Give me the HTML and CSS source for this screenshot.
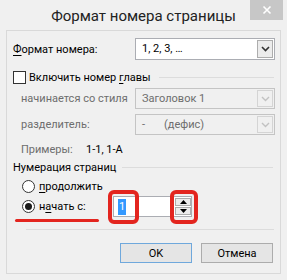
FILE: index.html
```html
<!DOCTYPE html>
<html lang="ru">
<head>
    <meta charset="UTF-8">
    <meta name="viewport" content="width=device-width, initial-scale=1.0">
    <title>Формат номера страницы</title>
    <link rel="stylesheet" href="styles.css">
</head>
<body>

<div class="window">
    <div class="titlebar">
        <span></span>
        <div class="title">Формат номера страницы</div>
        <div class="close">
            <svg width="10" height="10" viewBox="0 0 10 10"><path d="M1.5 1.5 L8.5 8.5 M8.5 1.5 L1.5 8.5" stroke="#fff" stroke-width="1.6"/></svg>
        </div>
    </div>

    <div class="content">
        <!-- format -->
        <div class="row row--format">
            <label class="lbl lbl--wide"><u>Ф</u>ормат номера:</label>
            <div class="combo">
                <span class="combo__text">1, 2, 3, …</span>
                <span class="combo__btn">
                    <svg width="9" height="6" viewBox="0 0 9 6"><path d="M1 1 L4.5 4.5 L8 1" fill="none" stroke="#333" stroke-width="1.6"/></svg>
                </span>
            </div>
        </div>

        <!-- chapter -->
        <div class="row row--check">
            <span class="check"></span>
            <span class="check__label">Включить номер <u>г</u>лавы</span>
            <span class="line"></span>
        </div>

        <div class="row row--sub">
            <label class="lbl lbl--sub disabled">начинается со стиля</label>
            <div class="combo combo--disabled">
                <span class="combo__text">Заголовок 1</span>
                <span class="combo__btn">
                    <svg width="9" height="6" viewBox="0 0 9 6"><path d="M1 1 L4.5 4.5 L8 1" fill="none" stroke="#c2c2c2" stroke-width="1.4"/></svg>
                </span>
            </div>
        </div>

        <div class="row row--sub row--sep">
            <label class="lbl lbl--sub disabled">разделитель:</label>
            <div class="combo combo--disabled">
                <span class="combo__text"><span class="dash">-</span>(дефис)</span>
                <span class="combo__btn">
                    <svg width="9" height="6" viewBox="0 0 9 6"><path d="M1 1 L4.5 4.5 L8 1" fill="none" stroke="#c2c2c2" stroke-width="1.4"/></svg>
                </span>
            </div>
        </div>

        <div class="row row--examples">
            <span class="disabled ex__label">Примеры:</span>
            <span class="ex__value">1-1, 1-A</span>
        </div>

        <!-- numbering -->
        <div class="row row--group">
            <span>Нумерация страниц</span>
            <span class="line"></span>
        </div>

        <div class="row row--radio">
            <span class="radio"></span>
            <span><u>п</u>родолжить</span>
        </div>

        <div class="row row--radio row--start">
            <span class="radio radio--on"></span>
            <span class="start__label">н<u>а</u>чать с:</span>
            <div class="spin">
                <div class="spin__input"><span class="sel">1</span></div>
                <div class="spin__btns">
                    <span class="spin__btn">
                        <svg width="7" height="4" viewBox="0 0 7 4"><path d="M0 4 L3.5 0 L7 4 Z" fill="#000"/></svg>
                    </span>
                    <span class="spin__btn">
                        <svg width="7" height="4" viewBox="0 0 7 4"><path d="M0 0 L3.5 4 L7 0 Z" fill="#000"/></svg>
                    </span>
                </div>
                <span class="mark mark--input"></span>
                <span class="mark mark--spin"></span>
            </div>
        </div>
        <div class="underline"></div>

        <div class="hr"></div>

        <div class="buttons">
            <button class="btn btn--default">OK</button>
            <button class="btn">Отмена</button>
        </div>
    </div>
</div>

</body>
</html>
```

FILE: styles.css
```css
*, *::after, *::before {
    margin: 0;padding: 0;box-sizing: border-box;
}
body {
    width: 287px;
    height: 280px;
    overflow: hidden;
    background: #f0f0f0;
    font-family: Roboto, 'Noto Sans', sans-serif;
    font-size: 11px;
    color: #000;
    white-space: nowrap;
}
u {text-decoration: underline;text-underline-offset: 2px;}
.window {
    height: 280px;
    display: flex;
    flex-direction: column;
    padding: 0 6px 6px 6px;
}
.titlebar {
    height: 30px;
    display: grid;
    grid-template-columns: 1fr auto 1fr;
    margin: 0 -6px;
}
.title {
    font-size: 15px;
    color: #222;
    line-height: 30px;
    padding-top: 1px;
}
.close {
    justify-self: end;
    width: 33px;
    height: 20px;
    margin-right: 4px;
    background: #c7c7c7;
    display: flex;align-items: center;justify-content: center;
}
.content {
    flex: 1;
    border: 1px solid #d9d9d9;
    background: #f0f0f0;
    padding: 7px 6px 0 6px;
    display: flex;
    flex-direction: column;
}
.row {display: flex;align-items: center;}
.row--format {height: 22px;}
.lbl {flex-shrink: 0;}
.lbl--wide {width: 122px;}
.combo {
    flex-shrink: 0;
    width: 140px;
    height: 22px;
    background: #fff;
    border: 1px solid #abadb3;
    display: flex;
    align-items: stretch;
    padding: 1px;
}
.combo__text {flex: 1;padding-left: 5px;line-height: 18px;}
.combo__btn {
    width: 16px;
    background: #ececec;
    border: 1px solid #adadad;
    display: flex;align-items: center;justify-content: center;
}
.combo--disabled {
    height: 21px;
    background: #f0f0f0;
    border-color: #c4c4c4;
    color: #6d6d6d;
}
.combo--disabled .combo__text {line-height: 17px;}
.combo--disabled .combo__btn {background: #f0f0f0;border-color: #d4d4d4;}
.dash {display: inline-block;width: 22px;}

.row--check {height: 22px;margin-top: 6px;}
.check {
    width: 13px;height: 13px;
    background: #fff;
    border: 1px solid #333;
    margin-right: 3px;
}
.line {flex: 1;height: 1px;background: #dcdcdc;margin-left: 8px;}

.row--sub {height: 21px;padding-left: 8px;}
.row--sep {margin-top: 5px;}
.lbl--sub {width: 114px;}
.disabled {color: #6d6d6d;}

.row--examples {height: 19px;margin-top: 5px;padding-left: 8px;}
.ex__label {width: 65px;}

.row--group {height: 16px;}
.row--group .line {margin-left: 6px;margin-right: 1px;}

.row--radio {height: 20px;padding-left: 9px;margin-top: 1px;}
.radio {
    width: 13px;height: 13px;
    border-radius: 50%;
    background: #fff;
    border: 1px solid #333;
    margin-right: 4px;
    display: flex;align-items: center;justify-content: center;
}
.radio--on::after {
    content: "";
    width: 7px;height: 7px;
    border-radius: 50%;
    background: #1a1a1a;
}
.row--start {height: 21px;margin-top: 0;}
.start__label {width: 74px;}
.spin {
    position: relative;
    display: flex;
    height: 21px;
    width: 79px;
    background: #fff;
    border: 1px solid #abadb3;
}
.spin__input {flex: 1;padding: 2px 0 0 4px;}
.sel {
    display: inline-block;
    background: #3399ff;
    color: #fff;
    padding: 0 1px;
    line-height: 16px;
}
.spin__btns {
    width: 16px;
    display: flex;
    flex-direction: column;
    gap: 1px;
    padding: 1px 0;
}
.spin__btn {
    flex: 1;
    background: #ececec;
    border: 1px solid #adadad;
    display: flex;align-items: center;justify-content: center;
}
.mark {
    position: absolute;
    border: 4px solid #e3251f;
    border-radius: 6px;
}
.mark--input {left: -6px;top: -7px;width: 31px;height: 34px;}
.mark--spin {left: 56px;top: -7px;width: 28px;height: 34px;}

.underline {
    width: 84px;
    height: 3px;
    margin: 2px 0 0 2px;
    background: #e3251f;
    border-radius: 2px;
}
.hr {height: 1px;background: #dcdcdc;margin: 7px 0 0 13px;}

.buttons {
    display: flex;
    justify-content: flex-end;
    gap: 9px;
    margin-top: 13px;
    padding-right: 1px;
}
.btn {
    width: 72px;
    height: 20px;
    font-family: inherit;
    font-size: 11px;
    background: #e5e5e5;
    border: 1px solid #acacac;
    color: #000;
}
.btn--default {border-color: #6fa8dc;}
```
